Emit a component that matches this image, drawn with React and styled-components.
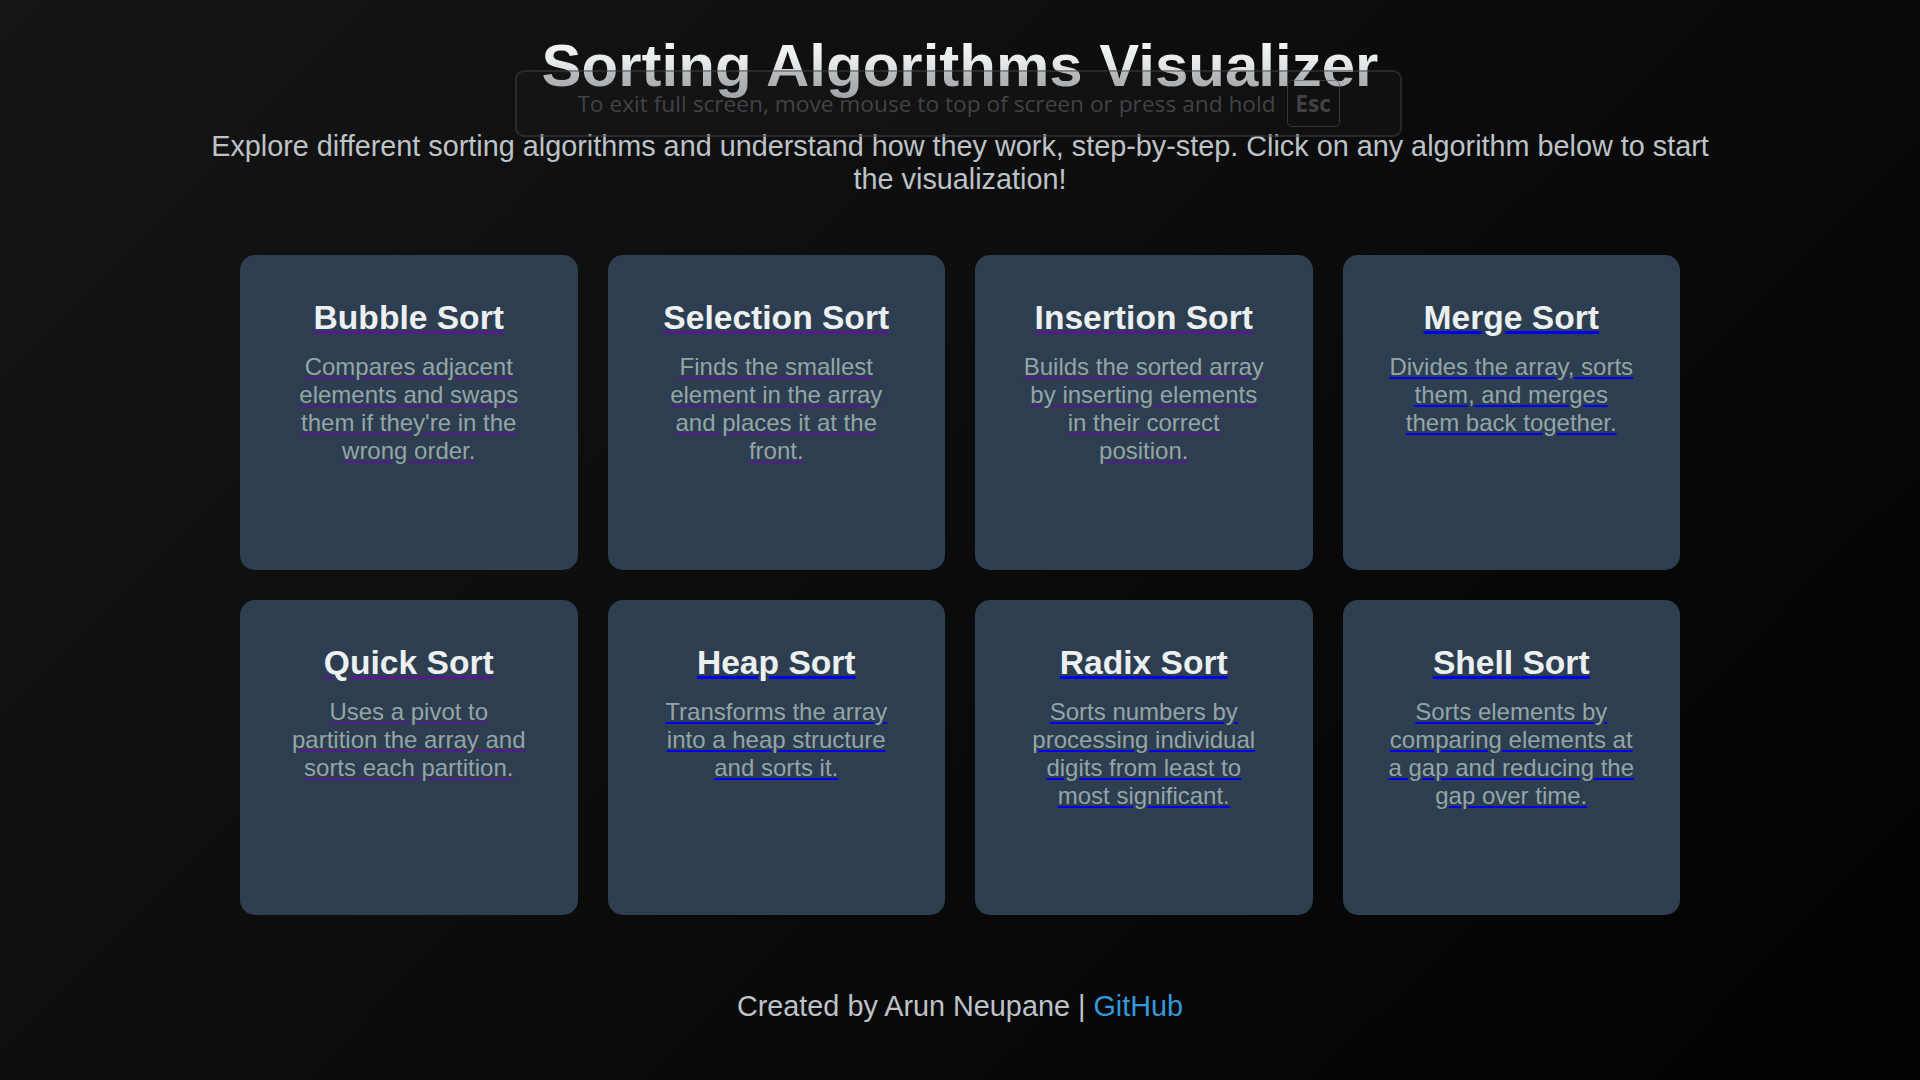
import React from "react";
import styled, { createGlobalStyle } from "styled-components";

const GlobalStyle = createGlobalStyle`
  html, body {
    margin: 0;
    padding: 0;
  }
  body {
    min-height: 100vh;
    background: linear-gradient(135deg, #151515 0%, #020202 100%);
    font-family: "Liberation Sans", Arial, sans-serif;
    color: #ecf0f1;
  }
`;

const algorithms = [
  { name: "Bubble Sort", text: "Compares adjacent elements and swaps them if they're in the wrong order.", visited: true },
  { name: "Selection Sort", text: "Finds the smallest element in the array and places it at the front.", visited: true },
  { name: "Insertion Sort", text: "Builds the sorted array by inserting elements in their correct position.", visited: true },
  { name: "Merge Sort", text: "Divides the array, sorts them, and merges them back together." },
  { name: "Quick Sort", text: "Uses a pivot to partition the array and sorts each partition.", visited: true },
  { name: "Heap Sort", text: "Transforms the array into a heap structure and sorts it." },
  { name: "Radix Sort", text: "Sorts numbers by processing individual digits from least to most significant." },
  { name: "Shell Sort", text: "Sorts elements by comparing elements at a gap and reducing the gap over time." },
];

const PageWrapper = styled.main`
  position: relative;
  display: flex;
  flex-direction: column;
  align-items: center;
  padding-top: 31px;
  padding-bottom: 40px;
`;

const Title = styled.h1`
  margin: 0;
  font-size: 60px;
  font-weight: 700;
  line-height: normal;
  background: linear-gradient(180deg, #fbfcfc 0%, #e6e9ea 45%, #b9bdc1 100%);
  -webkit-background-clip: text;
  background-clip: text;
  color: transparent;
`;

const Subtitle = styled.p`
  margin: 30px 0 0;
  max-width: 1500px;
  font-size: 28.8px;
  line-height: normal;
  text-align: center;
  color: #bdc3c7;
`;

const CardGrid = styled.section`
  display: grid;
  grid-template-columns: repeat(4, 1fr);
  gap: 30px;
  width: 1440px;
  margin-top: 59px;
`;

const Card = styled.a`
  box-sizing: border-box;
  display: block;
  height: 315px;
  padding: 44px 45.5px 0;
  border-radius: 15px;
  background: #2c3e50;
  text-align: center;
  text-decoration: underline;
  text-decoration-color: ${(p) => (p.$visited ? "#551a8b" : "#0000ee")};
  cursor: pointer;
`;

const CardTitle = styled.h3`
  margin: 0 0 16px;
  font-size: 33.6px;
  font-weight: 700;
  line-height: normal;
  color: #ecf0f1;
`;

const CardText = styled.p`
  margin: 0;
  font-size: 24px;
  line-height: normal;
  color: #95a5a6;
`;

const Footer = styled.footer`
  margin-top: 75px;
  font-size: 28.8px;
  color: #bdc3c7;

  a {
    color: #3498db;
    text-decoration: none;
  }
`;

const ExitBubble = styled.div`
  position: absolute;
  top: 70px;
  left: 515px;
  box-sizing: border-box;
  width: 887px;
  height: 67px;
  display: flex;
  align-items: center;
  justify-content: center;
  gap: 11px;
  border: 2px solid rgba(70, 70, 72, 0.45);
  border-radius: 9px;
  background: rgba(40, 40, 44, 0.18);
  font-family: "Open Sans", "Noto Sans", sans-serif;
  font-size: 22.7px;
  color: rgba(80, 80, 84, 0.8);
  pointer-events: none;
`;

const EscKey = styled.span`
  box-sizing: border-box;
  display: inline-flex;
  align-items: center;
  justify-content: center;
  height: 47px;
  min-width: 53px;
  padding: 0 6px;
  border: 1.5px solid rgba(80, 80, 84, 0.6);
  border-radius: 5px;
  font-weight: 700;
`;

const App = () => {
  return (
    <>
      <GlobalStyle />
      <PageWrapper>
        <Title>Sorting Algorithms Visualizer</Title>
        <Subtitle>
          Explore different sorting algorithms and understand how they work, step-by-step. Click on any algorithm below to start the visualization!
        </Subtitle>

        <CardGrid>
          {algorithms.map((algo) => (
            <Card key={algo.name} href="#" $visited={algo.visited}>
              <CardTitle>{algo.name}</CardTitle>
              <CardText>{algo.text}</CardText>
            </Card>
          ))}
        </CardGrid>

        <Footer>
          Created by Arun Neupane | <a href="#">GitHub</a>
        </Footer>

        <ExitBubble>
          <span>To exit full screen, move mouse to top of screen or press and hold</span>
          <EscKey>Esc</EscKey>
        </ExitBubble>
      </PageWrapper>
    </>
  );
};

export default App;
